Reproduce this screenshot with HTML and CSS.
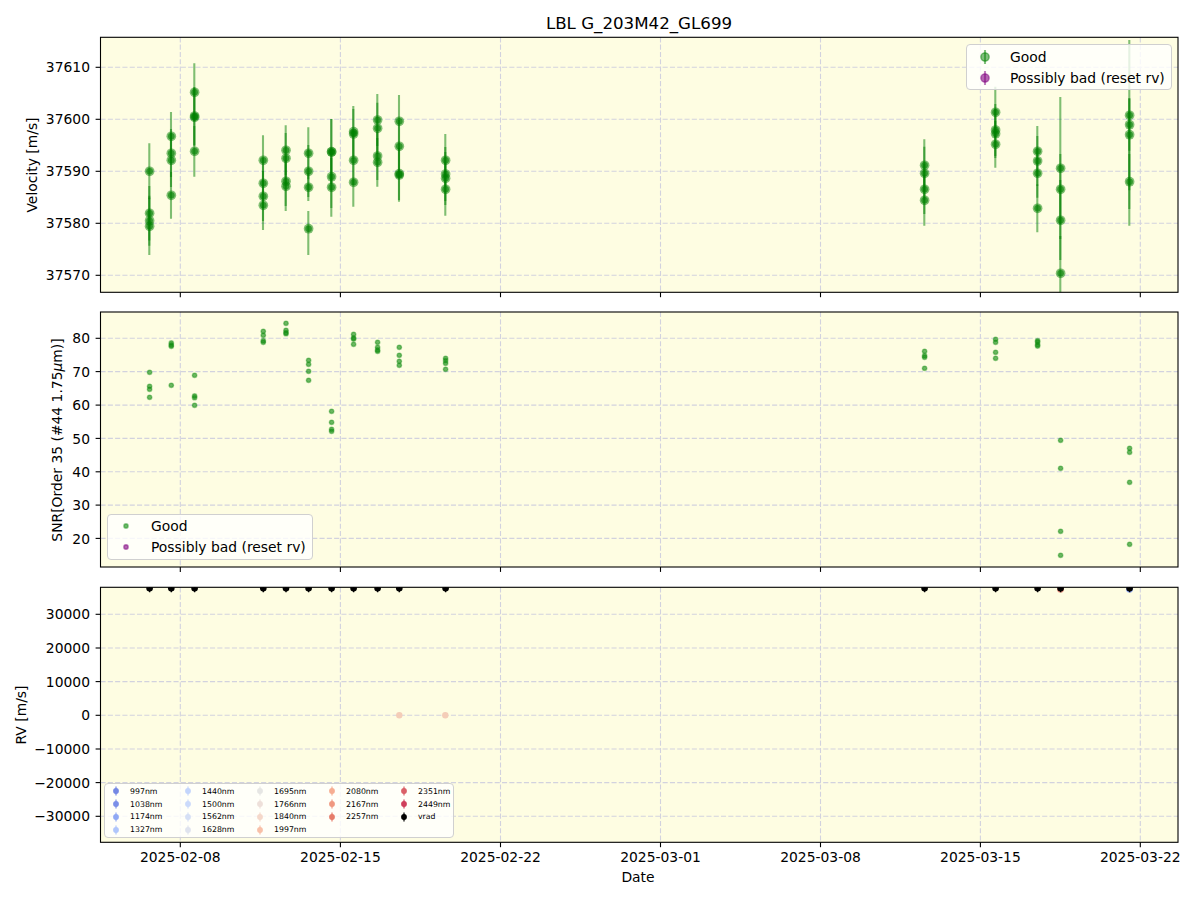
FILE: index.html
```html
<!DOCTYPE html>
<html lang="en">
<head>
  <meta charset="UTF-8" />
  <title>LBL G_203M42_GL699</title>
  <link rel="stylesheet" href="styles.css">
</head>
<body>
  <div class="figure">
    <svg id="plot" class="plot" viewBox="0 0 1200 900" xmlns="http://www.w3.org/2000/svg"></svg>

    <!-- Velocity legend -->
    <div class="legend legend-velocity">
      <div class="legend-row">
        <svg class="key key-large" viewBox="0 0 20 20"><line class="good-line" x1="10" y1="3" x2="10" y2="17"/><circle class="good-dot" cx="10" cy="10" r="4.17"/></svg>
        <span>Good</span>
      </div>
      <div class="legend-row">
        <svg class="key key-large" viewBox="0 0 20 20"><line class="bad-line" x1="10" y1="3" x2="10" y2="17"/><circle class="bad-dot" cx="10" cy="10" r="4.17"/></svg>
        <span>Possibly bad (reset rv)</span>
      </div>
    </div>

    <!-- SNR legend -->
    <div class="legend legend-snr">
      <div class="legend-row">
        <svg class="key key-large" viewBox="0 0 20 20"><circle class="snr-dot" cx="10" cy="10" r="2.2"/></svg>
        <span>Good</span>
      </div>
      <div class="legend-row">
        <svg class="key key-large" viewBox="0 0 20 20"><circle class="bad-dot" cx="10" cy="10" r="2.2"/></svg>
        <span>Possibly bad (reset rv)</span>
      </div>
    </div>

    <!-- Wavelength legend, filled in by plot.js -->
    <div class="legend legend-rv" id="rvLegend"></div>
  </div>

  <script src="plot.js"></script>
</body>
</html>
```

FILE: styles.css
```css
body {
  margin: 0;
  background: #fff;
  font-family: "DejaVu Sans", sans-serif;
  color: #000;
}

.figure {
  position: relative;
  width: 1200px;
  height: 900px;
  overflow: hidden;
}

.plot {
  display: block;
  width: 1200px;
  height: 900px;
}

/* Chart text */
.title {
  font-size: 16.67px;
  text-anchor: middle;
}

.tick-y {
  font-size: 13.89px;
  text-anchor: end;
}

.tick-x,
.axis-label {
  font-size: 13.89px;
  text-anchor: middle;
}

.math {
  font-style: italic;
}

/* Chart parts */
.axes-bg {
  fill: #fefde2;
}

.grid {
  stroke: #d2d2de;
  stroke-width: 1.1;
  stroke-dasharray: 5.1 2.2;
}

.spine {
  fill: none;
  stroke: #000;
  stroke-width: 1.1;
}

.tick {
  stroke: #000;
  stroke-width: 1.1;
}

.good-line {
  stroke: #008000;
  stroke-width: 2.08;
  stroke-opacity: 0.5;
}

.good-dot {
  fill: #008000;
  fill-opacity: 0.5;
  stroke: #008000;
  stroke-opacity: 0.5;
  stroke-width: 1.39;
}

/* Velocity markers: soft outer ring, darker core */
.ring-dot {
  fill: #008000;
  fill-opacity: 0.5;
}

.core-dot {
  fill: #008000;
  fill-opacity: 0.6;
}

.snr-dot {
  fill: #108c10;
  fill-opacity: 0.62;
  stroke: #108c10;
  stroke-opacity: 0.42;
  stroke-width: 1.39;
}

.bad-line {
  stroke: #800080;
  stroke-width: 2.08;
  stroke-opacity: 0.5;
}

.bad-dot {
  fill: #800080;
  fill-opacity: 0.6;
  stroke: #800080;
  stroke-opacity: 0.5;
  stroke-width: 1.39;
}

.vrad-dot {
  fill: #000;
}

.vrad-line {
  stroke: #000;
  stroke-width: 1.4;
}

.pale-dot {
  fill: #f4cdb8;
}

.tint-red {
  fill: #e88a7a;
}

.tint-blue {
  fill: #8fa8f4;
}

/* Legends sit over the axes */
.legend {
  position: absolute;
  box-sizing: border-box;
  background: rgba(255, 255, 255, 0.8);
  border: 1px solid #d0d0d0;
  border-radius: 4px;
  font-size: 13.89px;
}

.legend-velocity,
.legend-snr {
  display: flex;
  flex-direction: column;
  justify-content: center;
  gap: 1px;
  width: 206px;
  height: 46px;
}

.legend-velocity {
  left: 966px;
  top: 44px;
}

.legend-snr {
  left: 107px;
  top: 514px;
  padding-bottom: 2px;
}

.legend-row {
  display: flex;
  align-items: center;
  height: 20px;
}

.key {
  display: block;
  flex: none;
}

.key-large {
  width: 20px;
  height: 20px;
  margin: 0 15px 0 8px;
}

.legend-rv {
  left: 104px;
  top: 783px;
  width: 350px;
  height: 55px;
  padding-top: 1px;
  display: grid;
  grid-auto-flow: column;
  grid-template-columns: repeat(5, 72px);
  grid-template-rows: repeat(4, 12.8px);
  font-size: 7.8px;
}

.rv-item {
  display: flex;
  align-items: center;
}

/* Fourth column holds only three bands, the rest go in the fifth */
.rv-item:nth-child(16) {
  grid-column: 5;
  grid-row: 1;
}

.rv-item:nth-child(17) {
  grid-column: 5;
  grid-row: 2;
}

.rv-item:nth-child(18) {
  grid-column: 5;
  grid-row: 3;
}

.key-small {
  width: 8px;
  height: 10px;
  margin: 0 10px 0 7px;
}
```

FILE: plot.js
```js
const SVG_NS = 'http://www.w3.org/2000/svg';
const plot = document.getElementById('plot');

const LEFT = 100.5;
const RIGHT = 1178;
const AXES = [
  { top: 37.3, bottom: 292.3 },
  { top: 312, bottom: 567 },
  { top: 587.3, bottom: 842.3 }
];

const TICK_X = [180.3, 340.4, 500.5, 660.5, 820.5, 980.4, 1140.3];
const DATES = ['2025-02-08', '2025-02-15', '2025-02-22', '2025-03-01', '2025-03-08', '2025-03-15', '2025-03-22'];

const Y_TICKS = [
  [[67.3, '37610'], [119.3, '37600'], [171.3, '37590'], [223.3, '37580'], [275.3, '37570']],
  [[338.3, '80'], [371.6, '70'], [405.1, '60'], [438.4, '50'], [471.8, '40'], [505.1, '30'], [538.4, '20']],
  [[614.3, '30000'], [648, '20000'], [681.6, '10000'], [715.3, '0'], [749, '\u221210000'], [782.6, '\u221220000'], [816.3, '\u221230000']]
];

const COLS = [149.3, 171, 194.3, 263, 285.7, 308.3, 331.3, 353.3, 377.3, 399, 445.3, 924.3, 995.3, 1037.3, 1060.3, 1129.3];

// Velocity points per night: [y, top of error bar, bottom of error bar], in pixels
const VELOCITY = [
  [[171.3, 143.3, 199.3], [213.3, 186, 240.6], [220.7, 195.7, 245.7], [226.3, 197.6, 255]],
  [[136.3, 112, 160.3], [153.3, 129, 177], [160.3, 133, 187], [195.3, 172, 218.7]],
  [[92.3, 63.3, 121.3], [116, 87, 145], [117.3, 88, 146], [151.3, 126, 176.7]],
  [[160.3, 135.3, 185.3], [183.3, 158, 208], [196.3, 171, 221], [205.3, 180, 230]],
  [[150.3, 125.3, 175.3], [158.3, 133, 183], [181.3, 156, 206], [186.3, 161, 211]],
  [[153.3, 127.3, 179.3], [171.3, 145, 197], [187.3, 173, 201], [228.7, 211, 255]],
  [[151.7, 119, 184], [152, 119, 184], [176.7, 148, 208], [187.3, 158, 216.7]],
  [[131.7, 106, 157], [134, 109, 159], [160.3, 135, 185], [182.3, 158, 206.7]],
  [[120, 94, 146], [128.3, 102.7, 154], [156, 132, 180], [162.3, 138, 186.7]],
  [[121.3, 95, 147], [146.3, 120, 172], [173.7, 147, 200], [175, 148, 201.7]],
  [[160.3, 134, 186.3], [174, 147, 201], [178.3, 152, 205], [189.3, 163, 215.7]],
  [[165.3, 139.3, 191.3], [173.3, 146.7, 200], [189.3, 164, 214], [200.3, 175, 225.7]],
  [[112.3, 86.7, 138], [130, 104, 156], [133.7, 109, 158], [144.3, 121, 167.7]],
  [[151.3, 126, 176.6], [161, 136, 186], [173.3, 149, 197.7], [208.3, 184.3, 232.3]],
  [[168.3, 97, 239], [189.3, 154, 224], [220.3, 180, 260], [273.3, 236, 310]],
  [[115.3, 40, 190.3], [124.7, 98.7, 150.7], [134.7, 98, 209], [181.7, 154, 225.7]]
];

const SNR = [
  [372.3, 386.3, 389.3, 397.3],
  [343, 345, 346.3, 385.3],
  [375.3, 396, 397.7, 405.3],
  [331.3, 335.3, 340.7, 342.3],
  [323.3, 330.3, 332.7, 333.7],
  [360.3, 364.3, 371.3, 380.3],
  [411.3, 422.3, 429.3, 431.3],
  [334.3, 338, 339, 344.3],
  [342.3, 347.3, 350, 351.3],
  [347.3, 355.3, 361.3, 365.3],
  [358.3, 360.7, 363.3, 369.3],
  [351.3, 355.7, 357.3, 368.3],
  [339.3, 342.3, 352.3, 358.3],
  [340.7, 342, 344.7, 346],
  [440.3, 468.3, 531.3, 555.3],
  [448.3, 452.3, 482.3, 544.3]
];

const BANDS = [
  ['997nm', '#7488e4'], ['1038nm', '#7a8fe8'], ['1174nm', '#8fa8f4'], ['1327nm', '#b0c6fb'],
  ['1440nm', '#c3d5fc'], ['1500nm', '#cbdafb'], ['1562nm', '#d5dff5'], ['1628nm', '#dfe3ee'],
  ['1695nm', '#e6e6e4'], ['1766nm', '#eee0da'], ['1840nm', '#f5d8ca'], ['1997nm', '#f8c0a8'],
  ['2080nm', '#f6ad92'], ['2167nm', '#f09880'], ['2257nm', '#e67c6a'], ['2351nm', '#da6068'],
  ['2449nm', '#cf3f5c'], ['vrad', '#000000']
];

function add(parent, tag, attrs, text) {
  const el = document.createElementNS(SVG_NS, tag);
  for (const key in attrs) {
    el.setAttribute(key, attrs[key]);
  }
  if (text) {
    el.textContent = text;
  }
  parent.appendChild(el);
  return el;
}

function dot(parent, cls, x, y, r) {
  add(parent, 'circle', { class: cls, cx: x, cy: y, r: r });
}

// Background and grid go under the data
function drawBackground(ax, yTicks) {
  add(plot, 'rect', { class: 'axes-bg', x: LEFT, y: ax.top, width: RIGHT - LEFT, height: ax.bottom - ax.top });
  TICK_X.forEach(x => {
    add(plot, 'line', { class: 'grid', x1: x, y1: ax.top, x2: x, y2: ax.bottom });
  });
  yTicks.forEach(t => {
    add(plot, 'line', { class: 'grid', x1: LEFT, y1: t[0], x2: RIGHT, y2: t[0] });
  });
}

function clipGroup(ax, id) {
  const clip = add(plot, 'clipPath', { id: id });
  add(clip, 'rect', { x: LEFT, y: ax.top, width: RIGHT - LEFT, height: ax.bottom - ax.top });
  return add(plot, 'g', { 'clip-path': 'url(#' + id + ')' });
}

// Spines and ticks go over the data
function drawFrame(ax, yTicks, showDates) {
  add(plot, 'rect', { class: 'spine', x: LEFT, y: ax.top, width: RIGHT - LEFT, height: ax.bottom - ax.top });
  TICK_X.forEach((x, i) => {
    add(plot, 'line', { class: 'tick', x1: x, y1: ax.bottom, x2: x, y2: ax.bottom + 4.9 });
    if (showDates) {
      add(plot, 'text', { class: 'tick-x', x: x, y: ax.bottom + 19.8 }, DATES[i]);
    }
  });
  yTicks.forEach(t => {
    add(plot, 'line', { class: 'tick', x1: LEFT - 4.9, y1: t[0], x2: LEFT, y2: t[0] });
    add(plot, 'text', { class: 'tick-y', x: 90, y: t[0] + 5.1 }, t[1]);
  });
}

function yLabel(x, y, text) {
  return add(plot, 'text', { class: 'axis-label', x: x, y: y, transform: 'rotate(-90 ' + x + ' ' + y + ')' }, text);
}

// Velocity panel
drawBackground(AXES[0], Y_TICKS[0]);
const velocityGroup = clipGroup(AXES[0], 'clipVelocity');
VELOCITY.forEach((night, i) => {
  night.forEach(p => {
    add(velocityGroup, 'line', { class: 'good-line', x1: COLS[i], y1: p[1], x2: COLS[i], y2: p[2] });
    dot(velocityGroup, 'ring-dot', COLS[i] + 0.3, p[0], 4.85);
    dot(velocityGroup, 'core-dot', COLS[i] + 0.3, p[0], 3.3);
  });
});
drawFrame(AXES[0], Y_TICKS[0], false);

// SNR panel
drawBackground(AXES[1], Y_TICKS[1]);
const snrGroup = clipGroup(AXES[1], 'clipSnr');
SNR.forEach((night, i) => {
  night.forEach(y => dot(snrGroup, 'snr-dot', COLS[i] + 0.3, y, 2.2));
});
drawFrame(AXES[1], Y_TICKS[1], false);

// RV panel
drawBackground(AXES[2], Y_TICKS[2]);
const rvGroup = clipGroup(AXES[2], 'clipRv');
dot(rvGroup, 'pale-dot', 399.3, 715.3, 3.2);
dot(rvGroup, 'pale-dot', 445.3, 715.3, 3.2);
dot(rvGroup, 'tint-red', 1060.5, 589.2, 3.4);
dot(rvGroup, 'tint-blue', 1129.5, 589.2, 3.4);
COLS.forEach(x => {
  add(rvGroup, 'line', { class: 'vrad-line', x1: x + 0.3, y1: 587, x2: x + 0.3, y2: 592.3 });
  dot(rvGroup, 'vrad-dot', x + 0.3, 588.3, 3.3);
});
drawFrame(AXES[2], Y_TICKS[2], true);

// Figure text
add(plot, 'text', { class: 'title', x: 639, y: 29 }, 'LBL G_203M42_GL699');
add(plot, 'text', { class: 'axis-label', x: 638, y: 882 }, 'Date');
yLabel(37, 165, 'Velocity [m/s]');
const snrLabel = yLabel(62, 440, 'SNR[Order 35 (#44 1.75');
add(snrLabel, 'tspan', { class: 'math' }, '\u03bc');
add(snrLabel, 'tspan', {}, 'm)]');
yLabel(26, 715, 'RV [m/s]');

// Wavelength legend
const rvLegend = document.getElementById('rvLegend');
BANDS.forEach(band => {
  const item = document.createElement('div');
  item.className = 'rv-item';
  const key = document.createElementNS(SVG_NS, 'svg');
  key.setAttribute('class', 'key key-small');
  key.setAttribute('viewBox', '0 0 8 10');
  add(key, 'line', { x1: 4, y1: 0.5, x2: 4, y2: 9.5, stroke: band[1], 'stroke-width': 1.2 });
  add(key, 'circle', { cx: 4, cy: 5, r: 2.9, fill: band[1] });
  item.appendChild(key);
  const label = document.createElement('span');
  label.textContent = band[0];
  item.appendChild(label);
  rvLegend.appendChild(item);
});
```
